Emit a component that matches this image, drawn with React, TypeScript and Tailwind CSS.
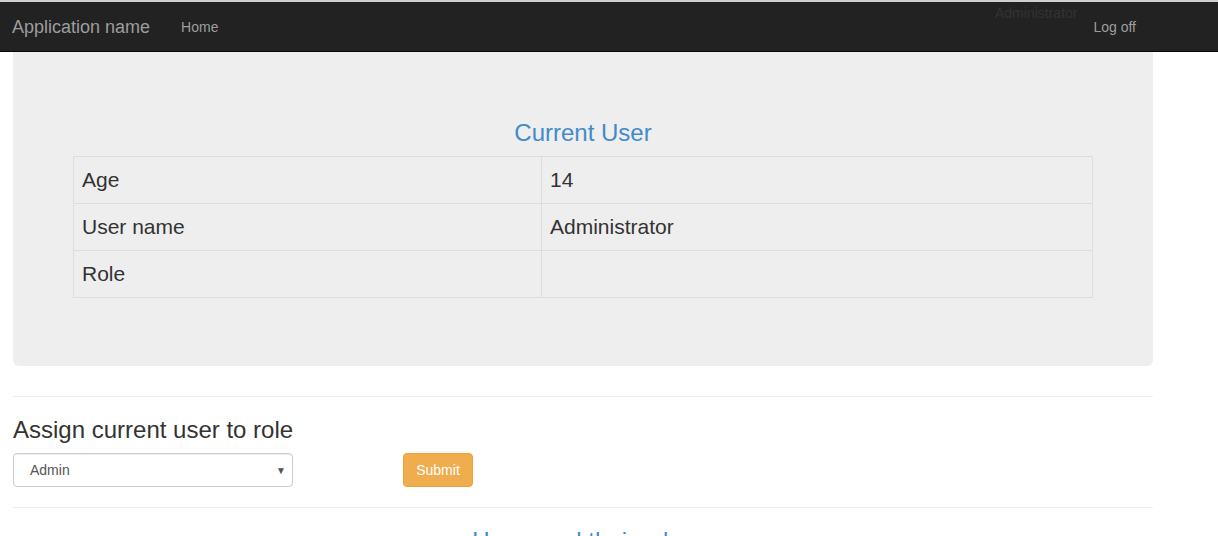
import React from "react";

const ROWS = [
  { label: "Age", value: "14" },
  { label: "User name", value: "Administrator" },
  { label: "Role", value: "" },
];

function NavBar() {
  return (
    <div className="relative">
      <div className="h-[2px] bg-[#cfcfcf]" />
      <nav className="h-[50px] bg-[#222222] border-b border-[#080808] flex items-center text-[#9d9d9d]">
        <span className="ml-[12px] text-[18px] leading-[20px]">Application name</span>
        <span className="ml-[31px] text-[14px] leading-[20px]">Home</span>
        <span className="ml-auto mr-[82px] text-[14px] leading-[20px]">Log off</span>
      </nav>
      <span className="absolute left-[995px] top-[3px] text-[14px] leading-[20px] text-[#333333]">Administrator</span>
    </div>
  );
}

function CurrentUser() {
  return (
    <div className="bg-[#eeeeee] rounded-b-[6px] px-[60px] pt-[48px] pb-[48px]">
      <h3 className="mt-[20px] mb-[10px] text-[24px] leading-[26px] text-center text-[#428bca]">Current User</h3>
      <table className="w-full border-collapse mb-[20px] text-[21px] text-[#333333]">
        <tbody>
          {ROWS.map((r) => (
            <tr key={r.label}>
              <td className="w-[468px] border border-[#dddddd] px-[8px] py-[8px] leading-[30px]">{r.label}</td>
              <td className="border border-[#dddddd] px-[8px] py-[8px] leading-[30px]">{r.value}</td>
            </tr>
          ))}
        </tbody>
      </table>
    </div>
  );
}

export default function App() {
  return (
    <div className="min-h-screen bg-white font-['Liberation_Sans',Arial,sans-serif] text-[14px] text-[#333333] overflow-hidden">
      <NavBar />
      <div className="ml-[13px] w-[1140px]">
        <CurrentUser />
        <hr className="mt-[30px] border-0 border-t border-[#eeeeee]" />
        <h3 className="mt-[20px] mb-[10px] text-[24px] leading-[26px]">Assign current user to role</h3>
        <div className="flex items-center">
          <div className="w-[280px] h-[34px] border border-[#cccccc] rounded-[4px] shadow-[inset_0_1px_1px_rgba(0,0,0,0.075)] bg-white flex items-center pl-[16px] pr-[6px]">
            <span className="text-[14px] text-[#555555]">Admin</span>
            <span className="ml-auto text-[10px] text-[#555555]">▼</span>
          </div>
          <button className="ml-[110px] w-[70px] h-[34px] bg-[#f0ad4e] border border-[#eea236] rounded-[4px] text-white text-[14px]">
            Submit
          </button>
        </div>
        <hr className="mt-[20px] border-0 border-t border-[#eeeeee]" />
        <h3 className="mt-[20px] text-[24px] leading-[26px] text-center text-[#428bca]">Users and their roles</h3>
      </div>
    </div>
  );
}
